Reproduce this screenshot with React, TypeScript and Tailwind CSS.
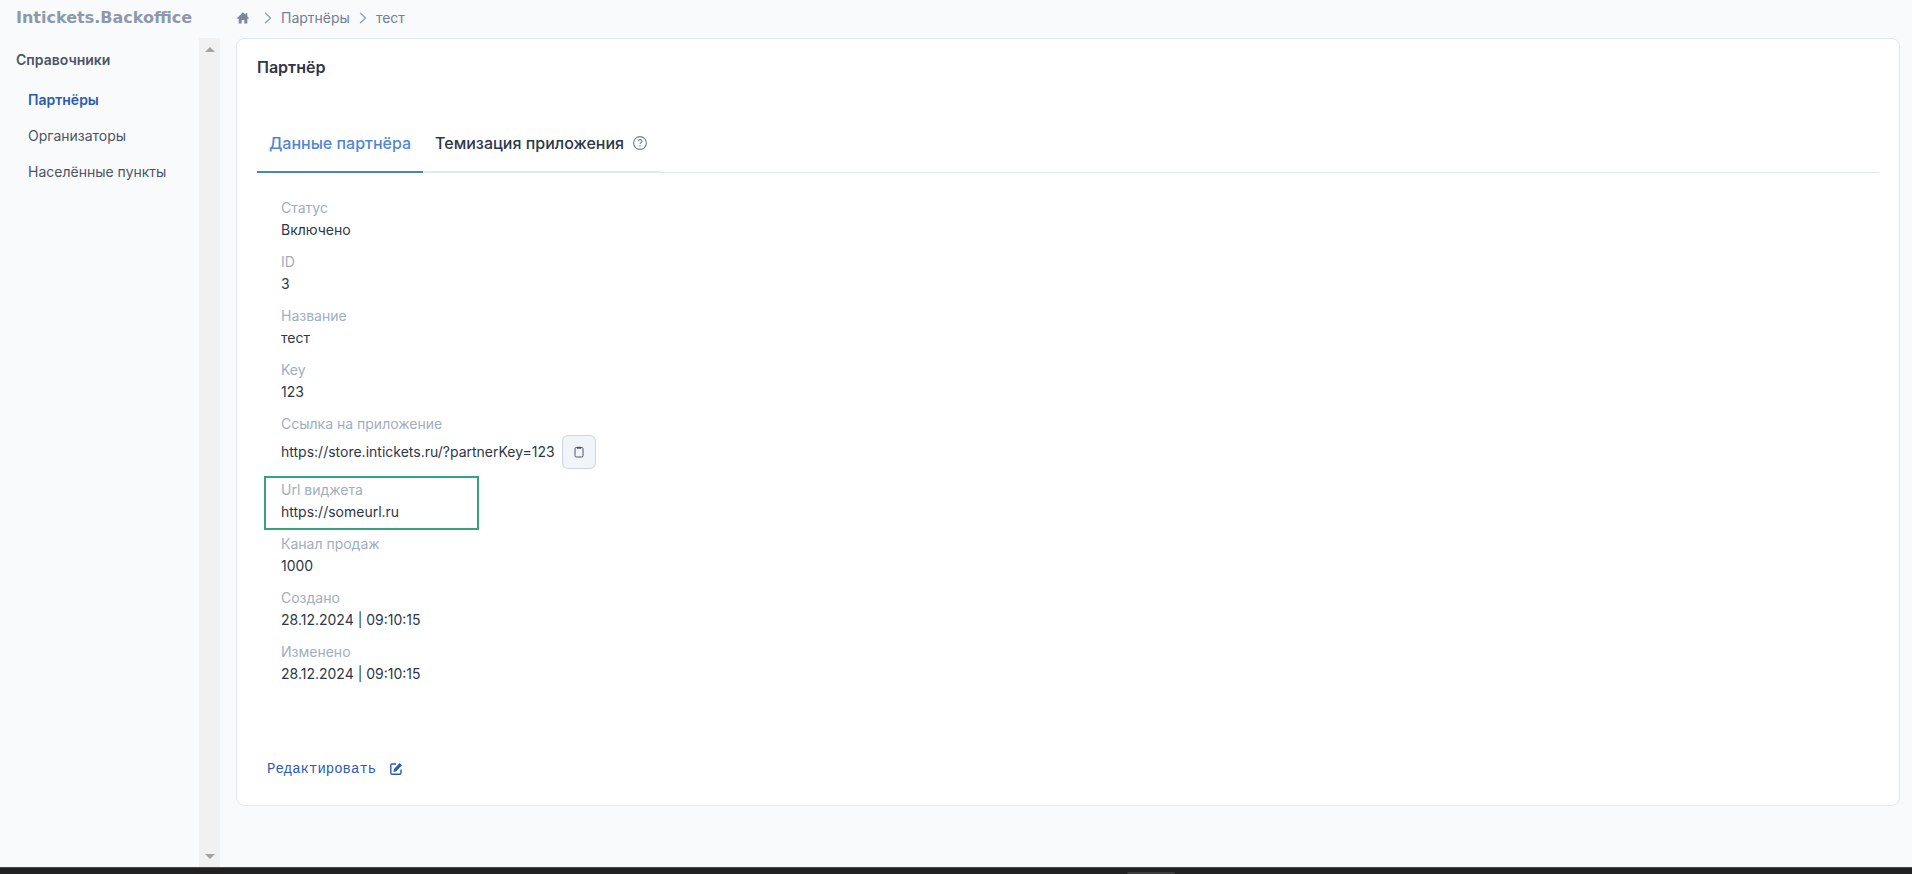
import React from 'react';

interface Field {
  label: string;
  value: string;
  copyable?: boolean;
  highlighted?: boolean;
}

const menuItems = [
  { id: 'partners', label: 'Партнёры', active: true },
  { id: 'organizers', label: 'Организаторы', active: false },
  { id: 'cities', label: 'Населённые пункты', active: false },
];

const fields: Field[] = [
  { label: 'Статус', value: 'Включено' },
  { label: 'ID', value: '3' },
  { label: 'Название', value: 'тест' },
  { label: 'Key', value: '123' },
  { label: 'Ссылка на приложение', value: 'https://store.intickets.ru/?partnerKey=123', copyable: true },
  { label: 'Url виджета', value: 'https://someurl.ru', highlighted: true },
  { label: 'Канал продаж', value: '1000' },
  { label: 'Создано', value: '28.12.2024 | 09:10:15' },
  { label: 'Изменено', value: '28.12.2024 | 09:10:15' },
];

const HomeIcon = () => (
  <svg viewBox="0 0 12 12" className="w-3 h-3" fill="currentColor" aria-hidden="true">
    <path d="M6 0.2 0.2 6v.8h1.5v4.8h3V8h2.6v3.6h3V6.800h1.500V6L10.300 4.300V1.200H8.600v1.500z" />
  </svg>
);

const Chevron = () => (
  <svg viewBox="0 0 8 12" className="w-2 h-3 text-[#94a1b5]" fill="none" stroke="currentColor" strokeWidth="1.4" strokeLinecap="round" strokeLinejoin="round" aria-hidden="true">
    <path d="M1.500 1.200 6.500 6l-5 4.800" />
  </svg>
);

const HelpIcon = () => (
  <svg viewBox="0 0 14 14" className="w-3.5 h-3.5" fill="none" stroke="currentColor" strokeWidth="1.1" aria-hidden="true">
    <circle cx="7" cy="7" r="6.4" />
    <path d="M5.2 5.200C5.300 4.100 6 3.600 7 3.600c1.200 0 2 .6 2 1.600C9 6.500 7 6.500 7 8" />
    <path d="M7 9.200v1.200" />
  </svg>
);

const ClipboardIcon = () => (
  <svg viewBox="0 0 12 12" className="w-3 h-3" fill="none" stroke="currentColor" aria-hidden="true">
    <rect x="2" y="1.500" width="8" height="9.500" rx="1.200" />
    <path d="M4 1.200h4v1.200H4z" fill="currentColor" strokeWidth="0.600" />
  </svg>
);

const EditIcon = () => (
  <svg viewBox="0 0 12 12" className="w-3 h-3" fill="none" stroke="currentColor" aria-hidden="true">
    <path d="M6 1H2A1.200 1.200 0 0 0 .8 2.200V10A1.200 1.200 0 0 0 2 11.200h7.800A1.200 1.200 0 0 0 11 10V6.500" strokeWidth="1.400" />
    <path d="M9.600 0 12 2.200 6.200 8.200 3.400 8.900 4 6z" fill="currentColor" stroke="none" />
  </svg>
);

const Sidebar = () => (
  <aside className="w-[220px] shrink-0 flex flex-col">
    <a href="#" className="h-9 mb-0.5 shrink-0 pl-4 flex items-center font-['DejaVu_Sans',sans-serif] text-base font-bold text-[#8d99ab]">
      Intickets.Backoffice
    </a>
    <div className="flex-1 flex">
      <nav className="flex-1 pl-4 pt-3">
        <h2 className="text-sm leading-5 font-semibold text-[#4a5568]">Справочники</h2>
        <ul className="mt-3 pl-3">
          {menuItems.map((item) => (
            <li key={item.id}>
              <a
                href={`#${item.id}`}
                className={`block py-2 text-sm leading-5 ${
                  item.active ? 'font-semibold text-[#2b5bb8]' : 'text-[#4a5568]'
                }`}
              >
                {item.label}
              </a>
            </li>
          ))}
        </ul>
      </nav>
      <div className="w-[21px] bg-[#f1f1f1] flex flex-col items-center justify-between py-2 text-[#a3a3a3]">
        <svg viewBox="0 0 10 5" className="w-[10px] h-[5px] mt-px" fill="currentColor" aria-hidden="true">
          <path d="M0 5 5 0l5 5z" />
        </svg>
        <svg viewBox="0 0 10 5" className="w-[10px] h-[5px]" fill="currentColor" aria-hidden="true">
          <path d="M0 0h10L5 5z" />
        </svg>
      </div>
    </div>
  </aside>
);

const FieldRow: React.FC<{ field: Field }> = ({ field }) => (
  <div className="relative">
    <dt className="text-sm leading-[22px] text-[#a0aec0]">{field.label}</dt>
    <dd className="flex items-center gap-[7px] text-sm leading-[22px] text-[#2d3748]">
      {field.value}
      {field.copyable && (
        <button
          type="button"
          aria-label="Скопировать"
          className="w-[34px] h-[34px] flex items-center justify-center rounded-md border border-[#cbd5e0] bg-[#f1f5f9] text-[#4a5568] cursor-pointer"
        >
          <ClipboardIcon />
        </button>
      )}
    </dd>
    {field.highlighted && (
      <div className="absolute -left-[17px] -top-[3px] w-[215px] h-[54px] border-2 border-[#38a27c] pointer-events-none" />
    )}
  </div>
);

export default function App() {
  return (
    <div className="min-h-screen flex flex-col bg-[#f9fafc] font-['Inter',sans-serif]">
      <div className="flex-1 flex">
        <Sidebar />

        <main className="flex-1 pl-4 pr-3">
          <nav aria-label="Навигация" className="h-9 mb-0.5 flex items-center gap-[9px] text-sm text-[#718096]">
            <a href="#" aria-label="Главная" className="ml-px mr-1.5 text-[#7b879b]">
              <HomeIcon />
            </a>
            <Chevron />
            <a href="#partners">Партнёры</a>
            <Chevron />
            <span>тест</span>
          </nav>

          <section className="bg-white border border-[#e2e8f0] rounded-lg px-5 pt-4 pb-4">
            <h1 className="text-base leading-6 font-semibold text-[#2d3748]">Партнёр</h1>

            {/* Tabs */}
            <div role="tablist" className="mt-9 flex border-b border-[#e2e8f0]">
              <button
                type="button"
                role="tab"
                aria-selected="true"
                className="h-[58px] px-3 -mb-px border-b-2 border-[#4a86b8] text-base font-medium text-[#4f86d6] cursor-pointer"
              >
                Данные партнёра
              </button>
              <button
                type="button"
                role="tab"
                aria-selected="false"
                className="h-[58px] pl-3 pr-3.5 -mb-px border-b-2 border-[#e2e8f0] flex items-center gap-[9px] text-base font-medium text-[#2d3748] cursor-pointer"
              >
                Темизация приложения
                <span className="text-[#718096]">
                  <HelpIcon />
                </span>
              </button>
            </div>

            <dl className="mt-6 px-6 flex flex-col gap-[10px]">
              {fields.map((field) => (
                <FieldRow key={field.label} field={field} />
              ))}
            </dl>

            <button
              type="button"
              className="mt-16 h-10 px-[10px] flex items-center gap-3.5 font-['Liberation_Mono',monospace] text-sm text-[#2b5bb8] cursor-pointer"
            >
              Редактировать
              <EditIcon />
            </button>
          </section>
        </main>
      </div>

      <footer className="h-[7px] shrink-0 bg-[#222021] border-t border-[#4a4a4a] flex items-end justify-center">
        <div className="ml-[390px] w-12 h-0.5 rounded-t bg-[#3d3b3c]" />
      </footer>
    </div>
  );
}
